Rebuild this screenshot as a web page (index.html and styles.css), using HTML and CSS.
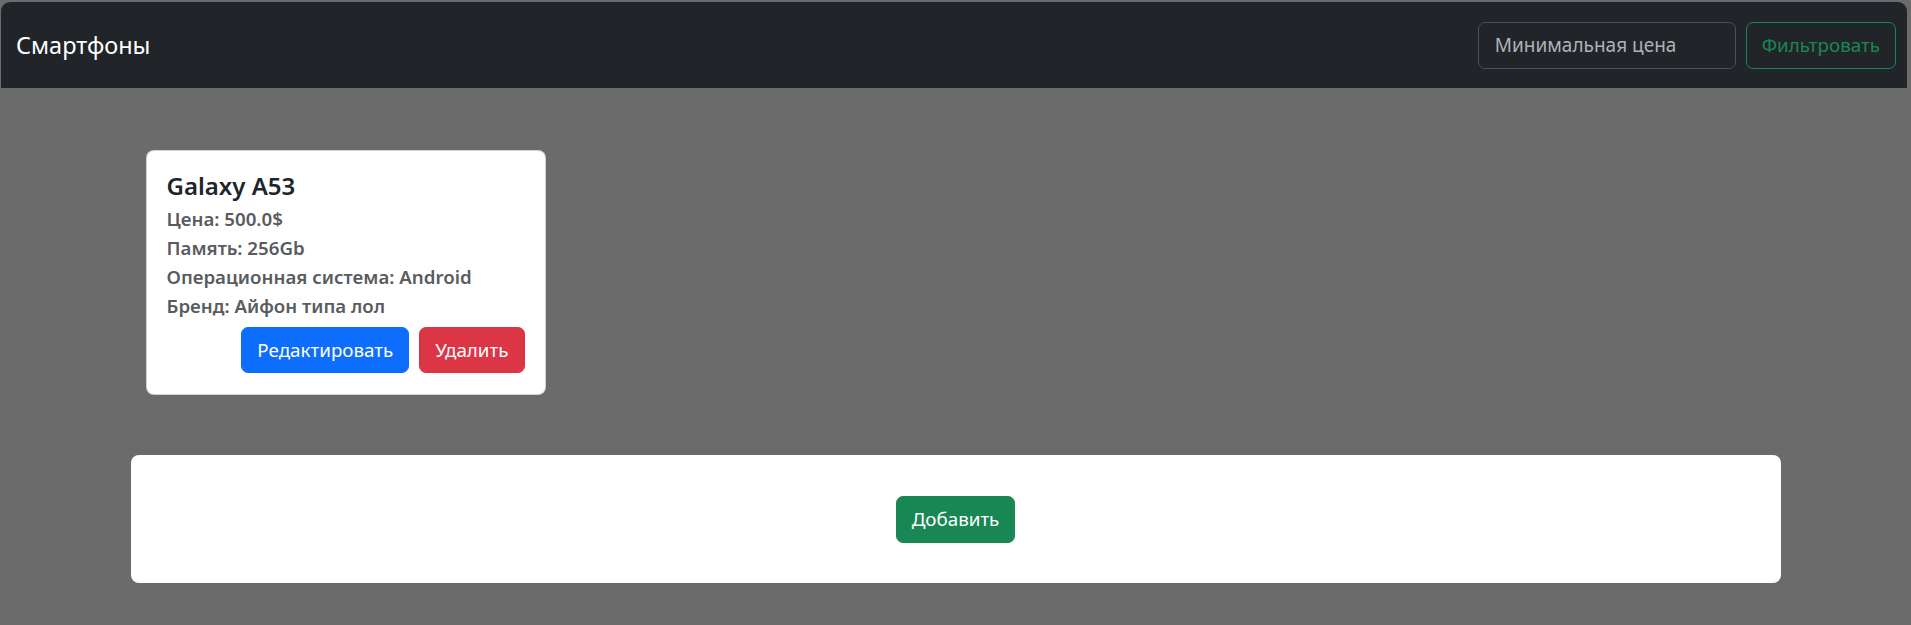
FILE: index.html
```html
<!DOCTYPE html>
<html lang="ru">
<head>
<meta charset="utf-8">
<title>Смартфоны</title>
<link rel="stylesheet" href="styles.css">
</head>
<body>
<nav class="navbar">
  <span class="brand">Смартфоны</span>
  <form class="filter">
    <input class="filter-input" type="text" placeholder="Минимальная цена">
    <button class="btn btn-outline-success" type="button">Фильтровать</button>
  </form>
</nav>
<main class="container">
  <div class="cards">
    <div class="card">
      <h5 class="card-title">Galaxy A53</h5>
      <div class="card-line">Цена: 500.0$</div>
      <div class="card-line">Память: 256Gb</div>
      <div class="card-line">Операционная система: Android</div>
      <div class="card-line">Бренд: Айфон типа лол</div>
      <div class="card-actions">
        <button class="btn btn-primary" type="button">Редактировать</button>
        <button class="btn btn-danger" type="button">Удалить</button>
      </div>
    </div>
  </div>
  <div class="add-panel">
    <button class="btn btn-success" type="button">Добавить</button>
  </div>
</main>
</body>
</html>
```
FILE: styles.css
```css
* { box-sizing: border-box; }
html, body { margin: 0; padding: 0; }
body {
  background: #6b6b6b;
  font-family: "Noto Sans", "Open Sans", sans-serif;
  font-size: 19px;
  color: #212529;
  height: 625px;
  overflow: hidden;
}
.navbar {
  margin: 2px 4px 0 1px;
  height: 86px;
  background: #212529;
  border-radius: 9px 9px 0 0;
  display: flex;
  align-items: center;
  justify-content: space-between;
  padding: 0 11px 0 15px;
}
.brand {
  color: #ffffff;
  font-size: 23.5px;
  line-height: 30px;
}
.filter {
  display: flex;
  gap: 10px;
  margin: 0;
}
.filter-input {
  width: 258px;
  height: 47px;
  background: #212529;
  border: 1px solid #495057;
  border-radius: 7px;
  padding: 0 16px;
  font-family: inherit;
  font-size: 19px;
  color: #dee2e6;
  outline: none;
}
.filter-input::placeholder { color: #aeb2b6; }
.btn {
  font-family: inherit;
  font-size: 18.8px;
  line-height: 30px;
  border-radius: 7px;
  border: 1px solid transparent;
  padding: 0 15px;
  height: 46px;
  cursor: pointer;
  color: #ffffff;
}
.btn-outline-success {
  height: 47px;
  background: transparent;
  border-color: #198754;
  color: #198754;
}
.btn-primary { background: #0d6efd; border-color: #0d6efd; }
.btn-danger { background: #dc3545; border-color: #dc3545; }
.btn-success { background: #198754; border-color: #198754; height: 47px; }
.container {
  width: 1650px;
  margin: 0 auto;
  padding-top: 62px;
}
.cards {
  padding: 0 15px;
  display: flex;
}
.card {
  width: 400px;
  height: 245px;
  background: #ffffff;
  border: 1px solid rgba(0,0,0,0.175);
  border-radius: 8px;
  padding: 20px 20px 21px;
  display: flex;
  flex-direction: column;
}
.card-title {
  margin: 0 0 3px;
  font-size: 24px;
  line-height: 30px;
  font-weight: 600;
  color: #212529;
}
.card-line {
  font-size: 18.7px;
  line-height: 29px;
  font-weight: 600;
  color: #595c5f;
}
.card-actions {
  margin-top: 7px;
  display: flex;
  justify-content: flex-end;
  gap: 10px;
}
.add-panel {
  margin-top: 60px;
  height: 128px;
  background: #ffffff;
  border-radius: 8px;
  display: flex;
  align-items: center;
  justify-content: center;
}
```
